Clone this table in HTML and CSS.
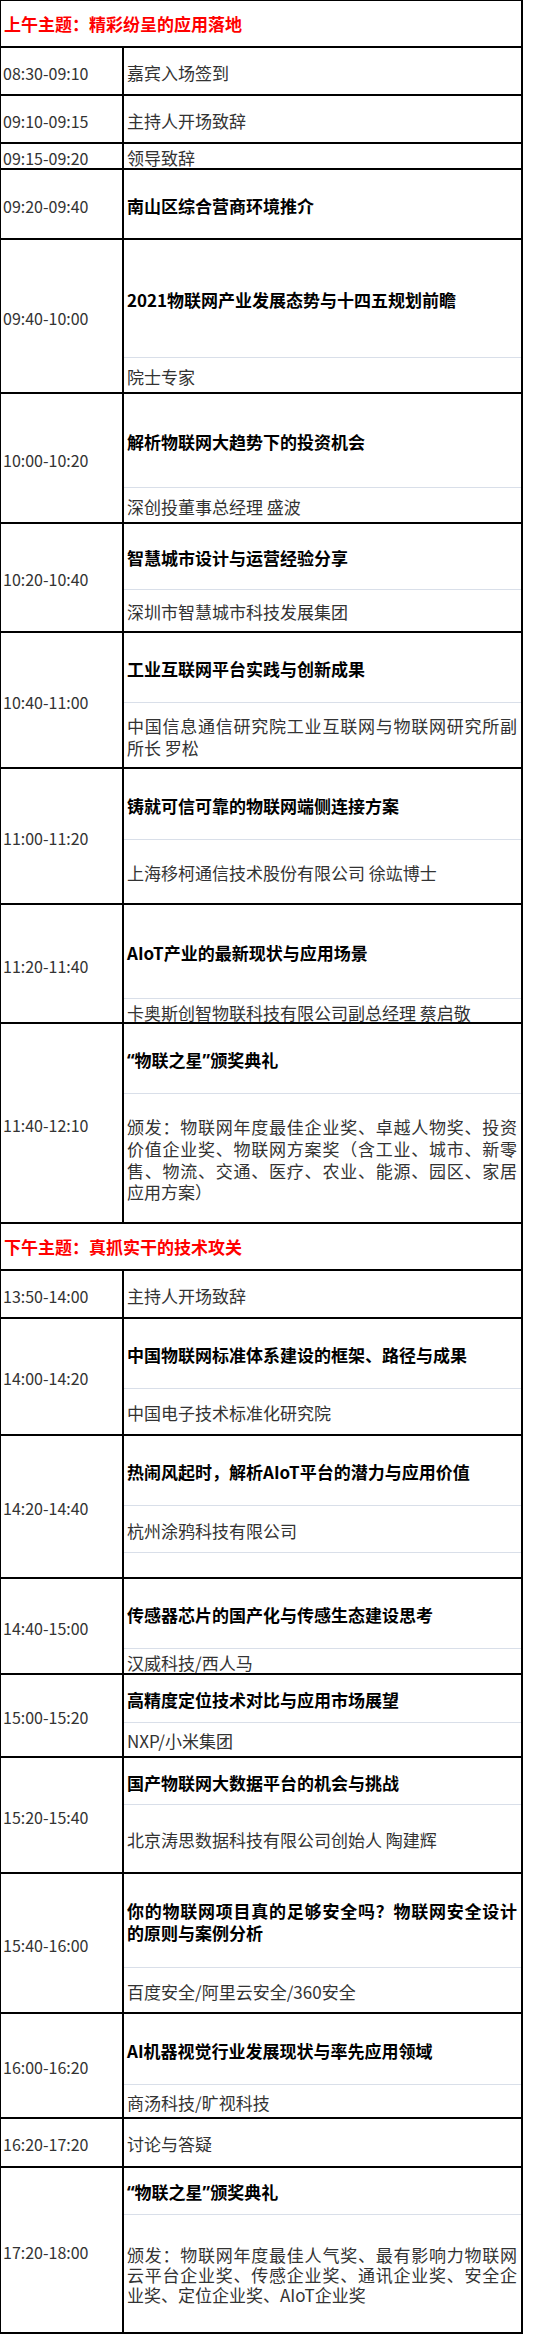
FILE: index.html
```html
<!DOCTYPE html>
<html lang="zh-CN">
<head>
<meta charset="utf-8">
<title>议程</title>
<link rel="stylesheet" href="styles.css">
</head>
<body>
<div class="sched">
  <div class="theme">上午主题：精彩纷呈的应用落地</div>

  <div class="row h46"><div class="time">08:30-09:10</div><div class="body"><div class="c">嘉宾入场签到</div></div></div>
  <div class="row h46"><div class="time">09:10-09:15</div><div class="body"><div class="c">主持人开场致辞</div></div></div>
  <div class="row h24"><div class="time">09:15-09:20</div><div class="body"><div class="c">领导致辞</div></div></div>
  <div class="row h68"><div class="time">09:20-09:40</div><div class="body"><div class="c b">南山区综合营商环境推介</div></div></div>
  <div class="row h152"><div class="time">09:40-10:00</div><div class="body"><div class="c b t117">2021物联网产业发展态势与十四五规划前瞻</div><div class="c">院士专家</div></div></div>
  <div class="row h128"><div class="time">10:00-10:20</div><div class="body"><div class="c b t93">解析物联网大趋势下的投资机会</div><div class="c">深创投董事总经理 盛波</div></div></div>
  <div class="row h107"><div class="time">10:20-10:40</div><div class="body"><div class="c b t65">智慧城市设计与运营经验分享</div><div class="c">深圳市智慧城市科技发展集团</div></div></div>
  <div class="row h134"><div class="time">10:40-11:00</div><div class="body"><div class="c b t69">工业互联网平台实践与创新成果</div><div class="c">中国信息通信研究院工业互联网与物联网研究所副所长 罗松</div></div></div>
  <div class="row h134"><div class="time">11:00-11:20</div><div class="body"><div class="c b t70">铸就可信可靠的物联网端侧连接方案</div><div class="c">上海移柯通信技术股份有限公司 徐竑博士</div></div></div>
  <div class="row h117"><div class="time">11:20-11:40</div><div class="body"><div class="c b t93">AIoT产业的最新现状与应用场景</div><div class="c">卡奥斯创智物联科技有限公司副总经理 蔡启敬</div></div></div>
  <div class="row h198"><div class="time">11:40-12:10</div><div class="body"><div class="c b t69"><span><span class="q">“</span>物联之星<span class="q">”</span>颁奖典礼</span></div><div class="c">颁发：物联网年度最佳企业奖、卓越人物奖、投资价值企业奖、物联网方案奖（含工业、城市、新零售、物流、交通、医疗、农业、能源、园区、家居应用方案）</div></div></div>

  <div class="theme">下午主题：真抓实干的技术攻关</div>

  <div class="row h46"><div class="time">13:50-14:00</div><div class="body"><div class="c">主持人开场致辞</div></div></div>
  <div class="row h115"><div class="time">14:00-14:20</div><div class="body"><div class="c b t69">中国物联网标准体系建设的框架、路径与成果</div><div class="c">中国电子技术标准化研究院</div></div></div>
  <div class="row h141"><div class="time">14:20-14:40</div><div class="body"><div class="c b t69">热闹风起时，解析AIoT平台的潜力与应用价值</div><div class="c t47">杭州涂鸦科技有限公司</div><div class="c"></div></div></div>
  <div class="row h94"><div class="time">14:40-15:00</div><div class="body"><div class="c b t69">传感器芯片的国产化与传感生态建设思考</div><div class="c">汉威科技/西人马</div></div></div>
  <div class="row h81"><div class="time">15:00-15:20</div><div class="body"><div class="c b t47">高精度定位技术对比与应用市场展望</div><div class="c">NXP/小米集团</div></div></div>
  <div class="row h114"><div class="time">15:20-15:40</div><div class="body"><div class="c b t46">国产物联网大数据平台的机会与挑战</div><div class="c">北京涛思数据科技有限公司创始人 陶建辉</div></div></div>
  <div class="row h138"><div class="time">15:40-16:00</div><div class="body"><div class="c b t93">你的物联网项目真的足够安全吗？物联网安全设计的原则与案例分析</div><div class="c">百度安全/阿里云安全/360安全</div></div></div>
  <div class="row h103"><div class="time">16:00-16:20</div><div class="body"><div class="c b t70">AI机器视觉行业发展现状与率先应用领域</div><div class="c">商汤科技/旷视科技</div></div></div>
  <div class="row h47"><div class="time">16:20-17:20</div><div class="body"><div class="c">讨论与答疑</div></div></div>
  <div class="row h164"><div class="time">17:20-18:00</div><div class="body"><div class="c b t46"><span><span class="q">“</span>物联之星<span class="q">”</span>颁奖典礼</span></div><div class="c tight">颁发：物联网年度最佳人气奖、最有影响力物联网云平台企业奖、传感企业奖、通讯企业奖、安全企业奖、定位企业奖、AIoT企业奖</div></div></div>
</div>
</body>
</html>
```
FILE: styles.css
```css
* {
  box-sizing: border-box;
}

html, body {
  margin: 0;
  padding: 0;
  background: #fff;
}

body {
  font-family: "Noto Sans CJK SC", "Noto Sans", sans-serif;
  font-size: 17px;
  color: #333;
}

.sched {
  width: 523px;
  border-top: 1px solid #000;
  border-left: 1px solid #000;
  border-right: 2px solid #000;
}

.theme {
  box-sizing: content-box;
  height: 45px;
  border-bottom: 2px solid #000;
  display: flex;
  align-items: center;
  padding: 0 3px;
  padding-top: 0;
  color: #f00;
  font-weight: 700;
  line-height: 22px;
}

.row {
  box-sizing: content-box;
  display: grid;
  grid-template-columns: 123px 1fr;
  border-bottom: 2px solid #000;
}

.time {
  border-right: 2px solid #000;
  display: flex;
  align-items: center;
  padding: 3px 0 0 2px;
  font-size: 16px;
  line-height: 20px;
  overflow: hidden;
}

.body {
  display: flex;
  flex-direction: column;
  min-width: 0;
}

.c {
  display: flex;
  align-items: center;
  flex: none;
  padding: 3px 4px 0 3px;
  line-height: 21.7px;
  text-align: justify;
  overflow: hidden;
}

.c + .c {
  border-top: 1px solid #d9dfe9;
}

.c:last-child {
  flex: 1 1 auto;
}

.b {
  font-weight: 700;
  color: #000;
}

.q {
  font-family: "Noto Sans", "Liberation Sans", sans-serif;
}

.tight {
  line-height: 20px;
}

.h24 { height: 24px; }
.h46 { height: 46px; }
.h47 { height: 47px; }
.h68 { height: 68px; }
.h81 { height: 81px; }
.h94 { height: 94px; }
.h103 { height: 103px; }
.h107 { height: 107px; }
.h114 { height: 114px; }
.h115 { height: 115px; }
.h117 { height: 117px; }
.h128 { height: 128px; }
.h134 { height: 134px; }
.h138 { height: 138px; }
.h141 { height: 141px; }
.h152 { height: 152px; }
.h164 { height: 164px; }
.h198 { height: 198px; }

.t46 { height: 46px; }
.t47 { height: 47px; }
.t65 { height: 65px; }
.t69 { height: 69px; }
.t70 { height: 70px; }
.t93 { height: 93px; }
.t117 { height: 117px; }
```
